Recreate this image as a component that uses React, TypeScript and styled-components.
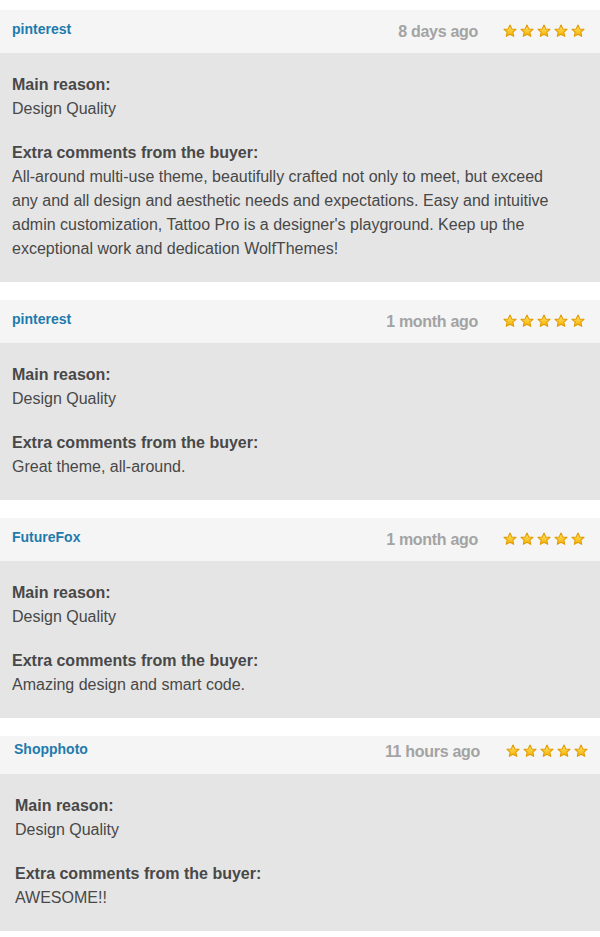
import React from "react";
import styled, { createGlobalStyle } from "styled-components";

const GlobalStyle = createGlobalStyle`
  html, body {
    margin: 0;
    padding: 0;
    background: #ffffff;
  }
  body {
    font-family: "Liberation Sans", Arial, Helvetica, sans-serif;
  }
`;

const Page = styled.div`
  display: flex;
  flex-direction: column;
  gap: 18px;
  padding-top: 10px;
  width: 600px;
`;

const Card = styled.section``;

const Header = styled.header<{ $compact?: boolean }>`
  display: flex;
  align-items: center;
  justify-content: space-between;
  height: ${(p) => (p.$compact ? 38 : 43)}px;
  padding: 0 ${(p) => (p.$compact ? 12 : 15)}px ${(p) => (p.$compact ? 7 : 0)}px
    ${(p) => (p.$compact ? 14 : 12)}px;
  background: #f5f5f5;
  box-sizing: border-box;
`;

const Author = styled.a`
  font-size: 14px;
  font-weight: 700;
  color: #1e7bad;
  text-decoration: none;
  padding-bottom: 5px;
`;

const Meta = styled.div<{ $compact?: boolean }>`
  display: flex;
  align-items: center;
  gap: ${(p) => (p.$compact ? 26 : 25)}px;
`;

const Date = styled.span`
  font-size: 16px;
  color: #a3a3a3;
  font-weight: 700;
  letter-spacing: -0.3px;
`;

const Stars = styled.div`
  display: flex;
  gap: 3px;
  padding-bottom: 2px;
`;

const Body = styled.div<{ $inset?: boolean }>`
  background: #e5e5e5;
  padding: 20px 40px 21px ${(p) => (p.$inset ? 15 : 12)}px;
  color: #484848;
  font-size: 16px;
  line-height: 24px;
`;

const Block = styled.div`
  & + & {
    margin-top: 20px;
  }
`;

const Label = styled.div`
  font-weight: 700;
`;

const Text = styled.div``;

const Star = () => (
  <svg width="14" height="14" viewBox="0 0 24 24">
    <defs>
      <linearGradient id="sg" x1="0" y1="0" x2="0" y2="1">
        <stop offset="0" stopColor="#ffe46b" />
        <stop offset="1" stopColor="#f6b200" />
      </linearGradient>
    </defs>
    <path
      d="M12 1.8l3.1 6.6 7.2.8-5.4 4.9 1.5 7.1L12 17.6l-6.4 3.6 1.5-7.1L1.7 9.2l7.2-.8z"
      fill="url(#sg)"
      stroke="#e09a00"
      strokeWidth="1.8"
      strokeLinejoin="round"
    />
  </svg>
);

type Review = {
  author: string;
  date: string;
  reason: string;
  comment: string;
  compact?: boolean;
};

const reviews: Review[] = [
  {
    author: "pinterest",
    date: "8 days ago",
    reason: "Design Quality",
    comment:
      "All-around multi-use theme, beautifully crafted not only to meet, but exceed any and all design and aesthetic needs and expectations. Easy and intuitive admin customization, Tattoo Pro is a designer's playground. Keep up the exceptional work and dedication WolfThemes!",
  },
  {
    author: "pinterest",
    date: "1 month ago",
    reason: "Design Quality",
    comment: "Great theme, all-around.",
  },
  {
    author: "FutureFox",
    date: "1 month ago",
    reason: "Design Quality",
    comment: "Amazing design and smart code.",
  },
  {
    author: "Shopphoto",
    date: "11 hours ago",
    reason: "Design Quality",
    comment: "AWESOME!!",
    compact: true,
  },
];

export default function App() {
  return (
    <>
      <GlobalStyle />
      <Page>
        {reviews.map((r, i) => (
          <Card key={i}>
            <Header $compact={r.compact}>
              <Author href="#">{r.author}</Author>
              <Meta $compact={r.compact}>
                <Date>{r.date}</Date>
                <Stars>
                  {[0, 1, 2, 3, 4].map((s) => (
                    <Star key={s} />
                  ))}
                </Stars>
              </Meta>
            </Header>
            <Body $inset={r.compact}>
              <Block>
                <Label>Main reason:</Label>
                <Text>{r.reason}</Text>
              </Block>
              <Block>
                <Label>Extra comments from the buyer:</Label>
                <Text>{r.comment}</Text>
              </Block>
            </Body>
          </Card>
        ))}
      </Page>
    </>
  );
}
